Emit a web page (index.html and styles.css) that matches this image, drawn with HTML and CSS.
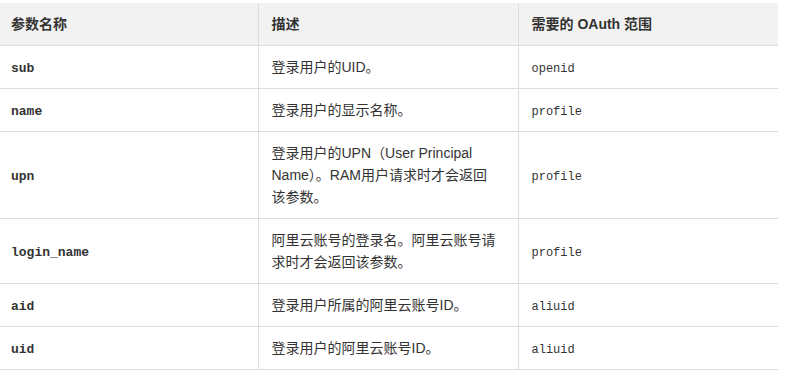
FILE: index.html
```html
<!DOCTYPE html>
<html lang="zh-CN">
<head>
<meta charset="utf-8">
<link rel="stylesheet" href="styles.css">
</head>
<body>
<table class="params">
  <colgroup>
    <col class="c1"><col class="c2"><col class="c3">
  </colgroup>
  <thead>
    <tr><th>参数名称</th><th>描述</th><th>需要的 OAuth 范围</th></tr>
  </thead>
  <tbody>
    <tr><td><code class="name">sub</code></td><td>登录用户的UID。</td><td><code class="scope">openid</code></td></tr>
    <tr><td><code class="name">name</code></td><td>登录用户的显示名称。</td><td><code class="scope">profile</code></td></tr>
    <tr><td><code class="name">upn</code></td><td>登录用户的UPN（User Principal Name）。RAM用户请求时才会返回该参数。</td><td><code class="scope">profile</code></td></tr>
    <tr><td><code class="name">login_name</code></td><td>阿里云账号的登录名。阿里云账号请求时才会返回该参数。</td><td><code class="scope">profile</code></td></tr>
    <tr><td><code class="name">aid</code></td><td>登录用户所属的阿里云账号ID。</td><td><code class="scope">aliuid</code></td></tr>
    <tr><td><code class="name">uid</code></td><td>登录用户的阿里云账号ID。</td><td><code class="scope">aliuid</code></td></tr>
  </tbody>
</table>
</body>
</html>
```

FILE: styles.css
```css
html, body {
  margin: 0;
  background: #fff;
}
body {
  padding-top: 3px;
  font-family: "Liberation Sans", Arial, "Noto Sans CJK SC", sans-serif;
  font-size: 14px;
  color: #333;
}
.params {
  width: 778px;
  border-collapse: collapse;
  table-layout: fixed;
}
.c1 { width: 258px; }
.c2 { width: 260px; }
.c3 { width: 260px; }
.params th,
.params td {
  height: 22px;
  padding: 10px 13px;
  line-height: 22px;
  text-align: left;
  vertical-align: middle;
  border-bottom: 1px solid #dddddd;
}
.params th {
  background: #f2f2f2;
  font-weight: bold;
}
.params th + th,
.params td + td {
  border-left: 1px solid #dddddd;
}
.params th:first-child,
.params td:first-child {
  padding-left: 11px;
}
.params td:nth-child(2) {
  padding-right: 20px;
}
code {
  font-family: "Liberation Mono", "Courier New", monospace;
  color: #333;
  line-height: 1;
}
code.name {
  font-size: 13px;
  font-weight: bold;
}
code.scope {
  font-size: 12px;
}
```
